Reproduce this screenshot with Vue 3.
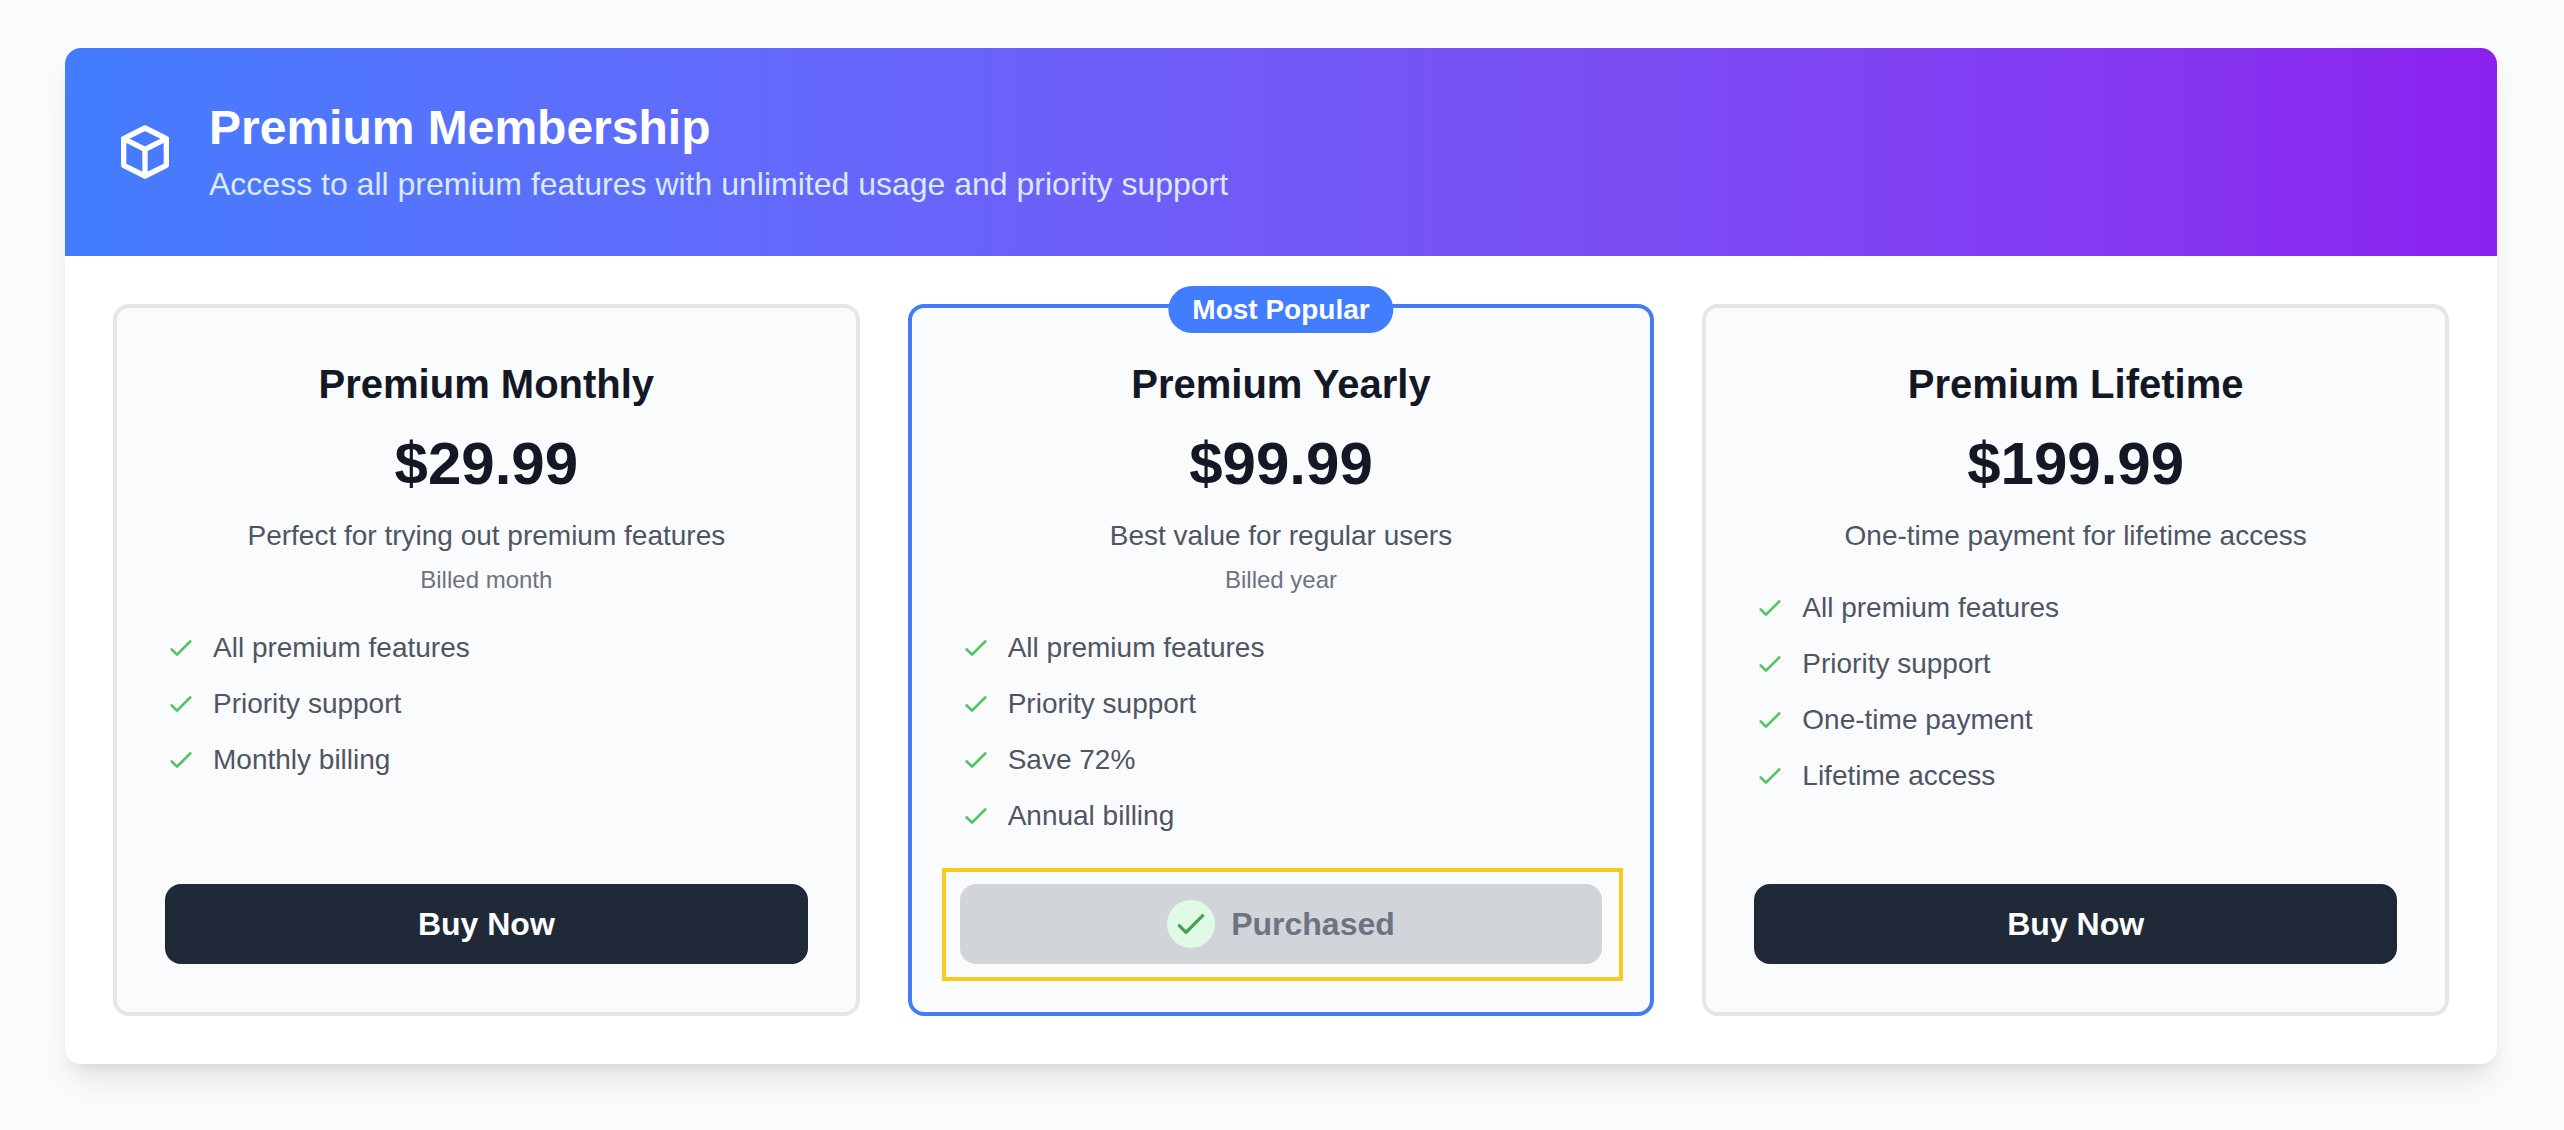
<script setup>
const plans = [
  {
    id: 'monthly',
    name: 'Premium Monthly',
    price: '$29.99',
    description: 'Perfect for trying out premium features',
    billing: 'Billed month',
    features: ['All premium features', 'Priority support', 'Monthly billing'],
  },
  {
    id: 'yearly',
    name: 'Premium Yearly',
    price: '$99.99',
    description: 'Best value for regular users',
    billing: 'Billed year',
    features: ['All premium features', 'Priority support', 'Save 72%', 'Annual billing'],
    popular: true,
    purchased: true,
  },
  {
    id: 'lifetime',
    name: 'Premium Lifetime',
    price: '$199.99',
    description: 'One-time payment for lifetime access',
    features: ['All premium features', 'Priority support', 'One-time payment', 'Lifetime access'],
  },
]
</script>

<template>
  <main class="page">
    <section class="membership">
      <header class="banner">
        <svg class="banner-icon" viewBox="0 0 24 24" aria-hidden="true">
          <path d="M20 7l-8-4-8 4m16 0l-8 4m8-4v10l-8 4m0-10L4 7m8 4v10M4 7v10l8 4" />
        </svg>
        <div>
          <h1 class="banner-title">Premium Membership</h1>
          <p class="banner-text">Access to all premium features with unlimited usage and priority support</p>
        </div>
      </header>

      <div class="plans">
        <article v-for="plan in plans" :key="plan.id" class="plan" :class="{ popular: plan.popular }">
          <span v-if="plan.popular" class="badge">Most Popular</span>
          <div class="summary">
            <h2 class="plan-name">{{ plan.name }}</h2>
            <p class="price">{{ plan.price }}</p>
            <p class="description">{{ plan.description }}</p>
            <p v-if="plan.billing" class="billing">{{ plan.billing }}</p>
          </div>
          <ul class="features">
            <li v-for="feature in plan.features" :key="feature" class="feature">
              <svg class="check" viewBox="0 0 24 24" aria-hidden="true"><path d="M5 13l4 4L19 7" /></svg>
              <span>{{ feature }}</span>
            </li>
          </ul>
          <div class="action" :class="{ highlighted: plan.purchased }">
            <button v-if="plan.purchased" class="button" type="button" disabled>
              <span class="done">
                <svg class="done-check" viewBox="0 0 24 24" aria-hidden="true"><path d="M5 13l4 4L19 7" /></svg>
              </span>
              Purchased
            </button>
            <button v-else class="button" type="button">Buy Now</button>
          </div>
        </article>
      </div>
    </section>
  </main>
</template>

<style>
body {
  margin: 0;
  background: #fafbfd;
}
</style>

<style scoped>
.page {
  padding: 48px 67px 66px 65px;
  font-family: "Liberation Sans", Arial, Helvetica, sans-serif;
  color: #131824;
}

h1,
h2,
p,
ul {
  margin: 0;
  padding: 0;
}

.membership {
  border-radius: 16px;
  background: #fff;
  box-shadow:
    0 20px 30px -6px rgba(0, 0, 0, 0.1),
    0 8px 12px -8px rgba(0, 0, 0, 0.1);
}

.banner {
  display: flex;
  align-items: center;
  gap: 32px;
  padding: 48px;
  border-radius: 16px 16px 0 0;
  background: linear-gradient(to right in oklab, #427dff, #8b20ef);
  color: #fff;
}

.banner-icon {
  flex: none;
  width: 64px;
  height: 64px;
}

svg {
  fill: none;
  stroke: currentColor;
  stroke-width: 2;
  stroke-linecap: round;
  stroke-linejoin: round;
}

.banner-title {
  font-size: 48px;
  line-height: 64px;
}

.banner-text {
  font-size: 32px;
  line-height: 48px;
  color: #dbe9fe;
}

.plans {
  display: grid;
  grid-template-columns: repeat(3, minmax(0, 1fr));
  gap: 48px;
  padding: 48px;
}

.plan {
  position: relative;
  display: flex;
  flex-direction: column;
  padding: 48px;
  border: 4px solid #e5e6e8;
  border-radius: 16px;
  background: #fafbfd;
}

.plan.popular {
  border-color: #437cf6;
}

.badge {
  position: absolute;
  top: -22px;
  left: 50%;
  transform: translateX(-50%);
  padding: 4px 24px 3px;
  border-radius: 24px;
  background: #427dff;
  color: #fff;
  font-size: 28px;
  font-weight: 700;
  line-height: 40px;
  white-space: nowrap;
}

.summary {
  margin-bottom: 32px;
  text-align: center;
}

.plan-name {
  font-size: 40px;
  line-height: 56px;
}

.price {
  margin-top: 16px;
  font-size: 60px;
  font-weight: 700;
  line-height: 72px;
}

.description {
  margin-top: 16px;
  font-size: 28px;
  line-height: 40px;
  color: #4f5562;
}

.billing {
  margin-top: 8px;
  font-size: 24px;
  line-height: 32px;
  color: #6e737f;
}

.features {
  display: flex;
  flex: 1;
  flex-direction: column;
  gap: 16px;
  margin-bottom: 48px;
  list-style: none;
}

.feature {
  display: flex;
  align-items: center;
  gap: 16px;
  font-size: 28px;
  line-height: 40px;
  color: #4f5562;
}

.check {
  flex: none;
  width: 32px;
  height: 32px;
  color: #4fc560;
}

.action {
  position: relative;
}

/* Frame that draws attention to the plan already owned */
.highlighted::after {
  content: "";
  position: absolute;
  inset: -16px -21px -17px -18px;
  border: 4px solid #f9ca1e;
  pointer-events: none;
}

.button {
  display: flex;
  align-items: center;
  justify-content: center;
  gap: 16px;
  width: 100%;
  padding: 16px;
  border: 0;
  border-radius: 16px;
  background: #202937;
  color: #fff;
  font: 700 32px/48px "Liberation Sans", Arial, Helvetica, sans-serif;
  cursor: pointer;
}

.button:disabled {
  background: #d1d5da;
  color: #6d7380;
  cursor: not-allowed;
}

.done {
  display: flex;
  align-items: center;
  justify-content: center;
  width: 48px;
  height: 48px;
  border-radius: 50%;
  background: #e0fae6;
}

.done-check {
  width: 40px;
  height: 40px;
  color: #41a34d;
}

@media (max-width: 1600px) {
  .plans {
    grid-template-columns: minmax(0, 1fr);
  }
}
</style>
